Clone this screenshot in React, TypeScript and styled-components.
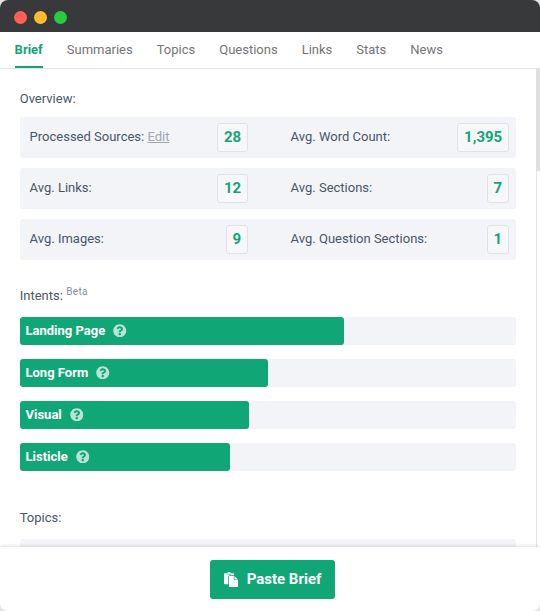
import React from "react";
import styled, { createGlobalStyle } from "styled-components";
import { FaQuestionCircle } from "react-icons/fa";

const GlobalStyle = createGlobalStyle`
  *, *::before, *::after { box-sizing: border-box; }
  body {
    margin: 0;
    background: #e4e4e4;
    color: #4a5568;
    font: 400 13px/20px Roboto, sans-serif;
  }
`;

const Window = styled.div`
  display: flex;
  flex-direction: column;
  width: 540px;
  height: 611px;
  overflow: hidden;
  border-radius: 8px;
  background: #fff;
`;

const TitleBar = styled.header`
  display: flex;
  flex: none;
  align-items: center;
  gap: 7px;
  height: 32px;
  padding: 2px 0 0 13.5px;
  background: #38393a;
`;

const Light = styled.span<{ $color: string }>`
  width: 13px;
  height: 13px;
  border-radius: 50%;
  background: ${(p) => p.$color};
`;

const Tabs = styled.nav`
  display: flex;
  flex: none;
  gap: 24px;
  height: 37px;
  padding: 0 14.6px;
  border-bottom: 1px solid #e2e2e2;
`;

const Tab = styled.a<{ $active?: boolean }>`
  height: 36px;
  padding-top: 8px;
  border-bottom: 2px solid ${(p) => (p.$active ? "#11a675" : "transparent")};
  color: ${(p) => (p.$active ? "#11a675" : "#757575")};
  font-weight: ${(p) => (p.$active ? 700 : 400)};
`;

const Body = styled.div`
  display: flex;
  flex: 1;
  min-height: 0;
`;

const Content = styled.main`
  flex: 1;
  overflow: hidden;
  padding: 20px 20px 0;
`;

const ScrollTrack = styled.div`
  width: 4px;
  border-left: 1px solid #e5e5e5;
`;

const ScrollThumb = styled.div`
  width: 4px;
  height: 102px;
  margin-left: -1px;
  background: #dfdfdf;
`;

const Heading = styled.h2<{ $top?: number }>`
  height: 20px;
  margin: ${(p) => p.$top ?? 0}px 0 0;
  font: inherit;
  text-indent: -0.3px;
`;

const Beta = styled.sup`
  display: inline-block;
  margin-left: 0.5px;
  color: #868e9c;
  font-size: 10px;
  line-height: 10px;
  vertical-align: 5px;
  letter-spacing: 0.3px;
`;

const Stats = styled.section`
  display: grid;
  gap: 10px;
  margin-top: 8px;
`;

const StatRow = styled.div`
  display: grid;
  grid-template-columns: 218.4px 218.4px;
  justify-content: space-between;
  height: 41px;
  padding: 0 7px 0 9.6px;
  border-radius: 3px;
  background: #f3f4f8;
`;

const Stat = styled.div`
  display: flex;
  align-items: center;
  justify-content: space-between;
`;

const StatLabel = styled.span`
  margin-top: -1px;
`;

const EditLink = styled.a`
  color: #a0a6b1;
  text-decoration: underline;
`;

const StatValue = styled.span`
  height: 29px;
  padding: 0 5.8px;
  border: 1px solid #e1e2e6;
  border-radius: 3px;
  background: #f7f7f9;
  color: #11a675;
  font-size: 15px;
  font-weight: 700;
  line-height: 27px;
`;

const Intents = styled.section`
  display: grid;
  gap: 14px;
  margin-top: 11px;
`;

const BarTrack = styled.div`
  height: 28px;
  border-radius: 3px;
  background: #f3f4f8;
`;

const Bar = styled.div`
  display: flex;
  align-items: center;
  gap: 8px;
  height: 28px;
  padding-left: 5.5px;
  border-radius: 3px;
  background: #11a675;
  color: #fff;
  font-weight: 700;
`;

const HelpIcon = styled(FaQuestionCircle)`
  width: 13.5px;
  height: 13.5px;
  margin-top: -1px;
  opacity: 0.7;
`;

const TopicPanel = styled.div`
  height: 41px;
  margin-top: 11px;
  border-radius: 3px;
  background: #f3f4f8;
`;

const Footer = styled.footer`
  z-index: 1;
  display: flex;
  flex: none;
  justify-content: center;
  height: 64px;
  padding: 13px 0 12px;
  padding-left: 5px;
  background: #fff;
  box-shadow: 0 0 4px rgba(0, 0, 0, 0.22);
`;

const PasteButton = styled.button`
  display: flex;
  align-items: center;
  justify-content: center;
  gap: 9px;
  width: 125px;
  height: 39px;
  padding: 0 0 2px;
  border: 0;
  border-radius: 3px;
  background: #11a675;
  color: #fff;
  font: 700 15px/20px Roboto, sans-serif;
`;

const PasteSvg = styled.svg`
  flex: none;
  width: 14px;
  height: 15px;
  margin-top: 1px;
  fill: currentColor;
`;

function PasteIcon() {
  return (
    <PasteSvg viewBox="0 0 14 15" aria-hidden="true">
      <path d="M.8 1.3H3Q3.4 0 5 0t2 1.3h2.3q.8 0 .8.8v1.2H5.8q-1.5 0-1.5 1.5v7.5H.8q-.8 0-.8-.8V2.1q0-.8.8-.8z" />
      <path d="M2.8 2.2h4.5" stroke="#11a675" strokeWidth=".7" />
      <path d="M5.8 4h4v3.5q0 .6.6.6H14v6.1q0 .8-.8.8H5.8q-.8 0-.8-.8V4.8q0-.8.8-.8z" />
      <path d="M10.5 4.1 13.9 7.4h-3.4z" />
    </PasteSvg>
  );
}

const tabs = ["Brief", "Summaries", "Topics", "Questions", "Links", "Stats", "News"];

const stats = [
  [
    { label: "Processed Sources:", value: "28", editable: true },
    { label: "Avg. Word Count:", value: "1,395" },
  ],
  [
    { label: "Avg. Links:", value: "12" },
    { label: "Avg. Sections:", value: "7" },
  ],
  [
    { label: "Avg. Images:", value: "9" },
    { label: "Avg. Question Sections:", value: "1" },
  ],
];

const intents = [
  { label: "Landing Page", share: 65.32 },
  { label: "Long Form", share: 50 },
  { label: "Visual", share: 46.17 },
  { label: "Listicle", share: 42.34 },
];

export default function App() {
  return (
    <Window>
      <GlobalStyle />
      <TitleBar>
        <Light $color="#ff5f57" />
        <Light $color="#ffbd2e" />
        <Light $color="#28ca41" />
      </TitleBar>
      <Tabs>
        {tabs.map((tab, i) => (
          <Tab key={tab} $active={i === 0}>{tab}</Tab>
        ))}
      </Tabs>
      <Body>
        <Content>
          <Heading>Overview:</Heading>
          <Stats>
            {stats.map((row) => (
              <StatRow key={row[0].label}>
                {row.map((stat) => (
                  <Stat key={stat.label}>
                    <StatLabel>
                      {stat.label}
                      {stat.editable && <> <EditLink>Edit</EditLink></>}
                    </StatLabel>
                    <StatValue>{stat.value}</StatValue>
                  </Stat>
                ))}
              </StatRow>
            ))}
          </Stats>
          <Heading $top={26}>Intents: <Beta>Beta</Beta></Heading>
          <Intents>
            {intents.map((intent) => (
              <BarTrack key={intent.label}>
                <Bar style={{ width: `${intent.share}%` }}>
                  {intent.label}
                  <HelpIcon />
                </Bar>
              </BarTrack>
            ))}
          </Intents>
          <Heading $top={37}>Topics:</Heading>
          <TopicPanel />
        </Content>
        <ScrollTrack>
          <ScrollThumb />
        </ScrollTrack>
      </Body>
      <Footer>
        <PasteButton>
          <PasteIcon />
          Paste Brief
        </PasteButton>
      </Footer>
    </Window>
  );
}
